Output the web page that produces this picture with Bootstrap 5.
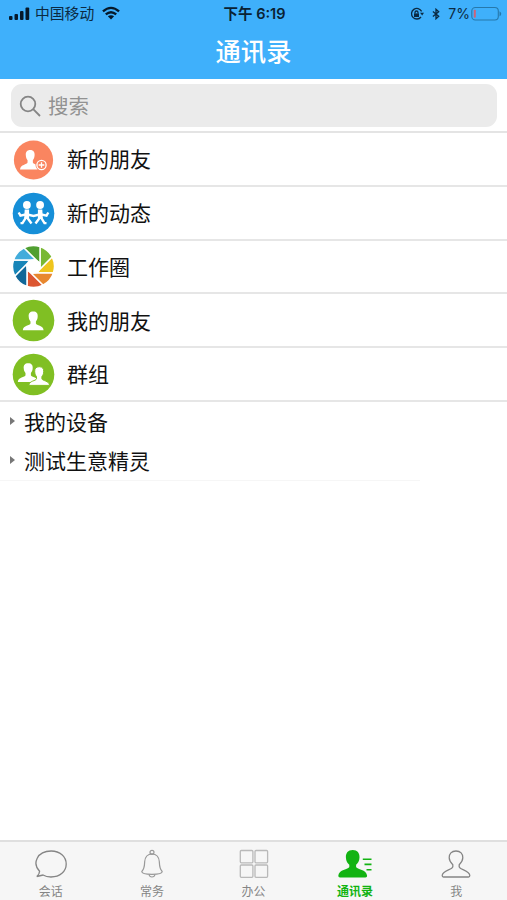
<!DOCTYPE html>
<html lang="zh-CN">
<head>
<meta charset="utf-8">
<meta name="viewport" content="width=device-width, initial-scale=1">
<title>通讯录</title>
<link href="https://cdn.jsdelivr.net/npm/bootstrap@5.3.0/dist/css/bootstrap.min.css" rel="stylesheet">
<style>
body{font-family:"Liberation Sans","Noto Sans CJK SC",sans-serif;color:#111;height:900px;overflow:hidden}
svg{display:block;flex:none}
.app-top{background:#3fb0fb;height:79px}
.status{height:27px;font:15px/27px Inter,"Noto Sans CJK SC",sans-serif;color:#0b2a42}
.status>div{flex:1 1 0}
.carrier{font-size:14.8px;padding-top:1px}
.clock{font-size:14.5px;font-weight:600;color:#0a2233;margin-right:6px}
.batt{font-size:14px}
.title{font-size:25.3px;line-height:50px;font-weight:500}
.search-wrap{height:54px;padding:5px 10px 5px 11px;border-bottom:2px solid #e4e4e4}
.search-box{height:43px;border-radius:11px;background:#ebebeb;color:#929292;font-size:20.5px;padding-left:8px}
.search-box span{padding-top:4px;margin-left:7px}
.list-group .contact{height:53.75px;padding:1px 0 0 12px;border:0;border-bottom:2px solid #e6e6e6;border-radius:0;font-size:21px;color:#111}
.contact svg{margin-right:12px}
.contact span{line-height:30px;padding-top:2px}
.group-row span{line-height:30px;padding-top:3px}
.group-row{height:39px;font-size:21px;padding-left:10px}
.caret{width:0;height:0;border:4px solid transparent;border-left:5px solid #777;border-right:0;margin-right:9px}
.hairline{height:1px;background:#f6f6f6;width:420px}
.tabs{height:60px;background:#f6f6f6;border-top:2px solid #dfdfdf;font-size:12px;color:#858585}
.tab-item{flex:1 1 0;padding-top:7px}
.tab-item span{line-height:16px;margin-top:5px}
.tab-item.on{color:#12b312;font-weight:700}
</style>
<script src="https://cdn.jsdelivr.net/npm/bootstrap@5.3.0/dist/js/bootstrap.bundle.min.js"></script>
</head>
<body class="d-flex flex-column bg-white">
<svg width="0" height="0" class="position-absolute">
  <defs>
    <path id="person" d="M0-9.3C-3.4-9.3-4.7-7.2-4.5-4.4C-4.4-1.9-3.6-.5-2.7.6V2.8C-3.2 5-10 4.6-10.4 9.4H10.4C10 4.6 3.2 5 2.7 2.8V.6C3.6-.5 4.4-1.9 4.5-4.4C4.7-7.2 3.4-9.3 0-9.3Z"/>
    <path id="blade" d="M6.5-20V2.7L18.7-9.5A21 21 0 0 0 6.5-20Z" stroke="#fff" stroke-width="1.5"/>
  </defs>
</svg>
<header class="app-top flex-shrink-0">
  <div class="status d-flex align-items-center">
    <div class="d-flex align-items-center ps-2">
      <svg width="23" height="16" viewBox="0 0 23 16" fill="#06192a"><rect x="1" y="10" width="3.5" height="4" rx="1"/><rect x="6.5" y="8" width="3.5" height="6" rx="1"/><rect x="12" y="5" width="3.5" height="9" rx="1"/><rect x="17.5" y="1.5" width="3.7" height="12.5" rx="1"/></svg>
      <span class="carrier ms-1">中国移动</span>
      <svg class="ms-2" width="18" height="15" viewBox="0 0 19 15" fill="none" stroke="#06192a" stroke-width="2.5"><path d="M1 5.2Q9.5-2.1 18 5.2M4 8.5Q9.5 3.8 15 8.5"/><path d="M9.5 13.8L6.2 10.5Q9.5 8 12.8 10.5Z" fill="#06192a" stroke="none"/></svg>
    </div>
    <span class="clock">下午 6:19</span>
    <div class="d-flex align-items-center justify-content-end">
      <svg width="14" height="14" viewBox="0 0 14 14" fill="none" stroke="#0b2a42" stroke-width="1.3"><path d="M11.6 4.4A5.3 5.3 0 1 0 11 10"/><path d="M10 5.8H14L12.2 8.5Z" fill="#0b2a42" stroke="none"/><rect x="4" y="6.4" width="5" height="3.6" fill="#0b2a42" stroke="none"/><path d="M5 6.5V5.4Q5 4 6.5 4T8 5.4V6.5"/></svg>
      <svg class="ms-2" width="8" height="12" viewBox="0 0 9 13" fill="none" stroke="#0b2a42" stroke-width="1.5"><path d="M1 3.8L7.5 9L4.5 11.8V1.2L7.5 4L1 9.2"/></svg>
      <span class="batt ms-2">7%</span>
      <svg class="me-1" width="33" height="16" viewBox="0 0 33 16"><rect x="1.8" y="1.5" width="26.5" height="12.5" rx="3.5" fill="none" stroke="#2678ab" stroke-width="1.1"/><rect x="3.8" y="3.8" width="2" height="8" rx=".8" fill="#ce6379"/><path d="M29.5 5.2Q33 7.8 29.5 10.4Z" fill="#2678ab"/></svg>
    </div>
  </div>
  <h1 class="title text-white text-center m-0">通讯录</h1>
</header>

<div class="search-wrap flex-shrink-0">
  <div class="search-box d-flex align-items-center">
    <svg width="22" height="22" viewBox="0 0 22 22" fill="none" stroke="#858585" stroke-width="1.8"><circle cx="9" cy="9" r="7.3"/><path d="M14.2 14.2L21 21"/></svg>
    <span>搜索</span>
  </div>
</div>

<main class="flex-grow-1">
  <div class="list-group rounded-0">
    <div class="list-group-item contact d-flex align-items-center">
      <svg width="43" height="43" viewBox="-21.5 -22 43 43"><circle r="19.6" fill="#fa8560"/><use href="#person" transform="translate(-3.3 -.4) scale(.98 1.04)" fill="#fff"/><circle cx="8" cy="5" r="6" fill="#fa8560"/><circle cx="8" cy="5" r="4.6" fill="none" stroke="#fff" stroke-width="1.3"/><path d="M5.2 5H10.8M8 2.2V7.8" stroke="#fff" stroke-width="1.3"/></svg>
      <span>新的朋友</span>
    </div>
    <div class="list-group-item contact d-flex align-items-center">
      <svg width="43" height="43" viewBox="-21.5 -21.5 43 43"><circle r="20.8" fill="#168fd8"/><g fill="#fff"><circle cx="-6.6" cy="-8.5" r="3.9"/><circle cx="6.6" cy="-8.5" r="3.9"/><path d="M-8.8-4H-4.4L-4.4 4.5H-9.3ZM4.4-4H8.8L9.3 4.5H4.4Z"/></g><g fill="none" stroke="#fff" stroke-width="2.4"><path d="M-14.8-1L-13 2.2L-7 .8L0 2.5L7 .8L13 2.2L14.8-1"/><path d="M-13 9.6H-11L-7 3.2L-2 10M13 9.6H11L7 3.2L2 10"/></g></svg>
      <span>新的动态</span>
    </div>
    <div class="list-group-item contact d-flex align-items-center">
      <svg width="43" height="43" viewBox="-21.5 -21.5 43 43"><use href="#blade" fill="#79b833"/><use href="#blade" fill="#efc51d" transform="rotate(45)"/><use href="#blade" fill="#e8872e" transform="rotate(90)"/><use href="#blade" fill="#dc5631" transform="rotate(135)"/><use href="#blade" fill="#116798" transform="rotate(180)"/><use href="#blade" fill="#1785b8" transform="rotate(225)"/><use href="#blade" fill="#42acdb" transform="rotate(270)"/><use href="#blade" fill="#509f31" transform="rotate(315)"/><circle r="7.3" fill="#fff"/></svg>
      <span>工作圈</span>
    </div>
    <div class="list-group-item contact d-flex align-items-center">
      <svg width="43" height="43" viewBox="-21.5 -21.5 43 43"><circle r="20.8" fill="#80bf23"/><use href="#person" transform="translate(-.3 .3)" fill="#fff"/></svg>
      <span>我的朋友</span>
    </div>
    <div class="list-group-item contact d-flex align-items-center">
      <svg width="43" height="43" viewBox="-21.5 -21.5 43 43"><circle r="20.8" fill="#80bf23"/><use href="#person" transform="translate(-5.3 -2)" fill="#fff"/><use href="#person" transform="translate(5.7 1.5)" fill="#fff" stroke="#80bf23" stroke-width="1"/></svg>
      <span>群组</span>
    </div>
  </div>
  <div class="group-row d-flex align-items-center"><i class="caret"></i><span>我的设备</span></div>
  <div class="group-row d-flex align-items-center"><i class="caret"></i><span>测试生意精灵</span></div>
  <div class="hairline"></div>
</main>

<nav class="tabs d-flex flex-shrink-0">
  <div class="tab-item d-flex flex-column align-items-center">
    <svg width="34" height="30" viewBox="0 0 34 30" fill="none" stroke="#858585" stroke-width="1.3"><path d="M5.6 22.3C-2 14.5 3 2 17.2 2C26 2 32.2 7.5 32.2 15C32.2 22.5 26 28 17 28C13.5 28 11 27.2 9 26L2.8 27.5C4.8 26 5.5 24 5.6 22.3Z"/></svg>
    <span>会话</span>
  </div>
  <div class="tab-item d-flex flex-column align-items-center">
    <svg width="24" height="30" viewBox="0 0 24 30" fill="none" stroke="#999" stroke-width="1.2"><circle cx="12" cy="3.3" r="2"/><path d="M12 4.8C7.5 4.8 5 8.5 4.7 12.5C4.5 17 4.5 20 1.8 22.5C1.8 24.2 6.5 25.3 12 25.3S22.2 24.2 22.2 22.5C19.5 20 19.5 17 19.3 12.5C19 8.5 16.5 4.8 12 4.8Z"/><path d="M9 25.5Q9.5 28 12 28T15 25.5"/></svg>
    <span>常务</span>
  </div>
  <div class="tab-item d-flex flex-column align-items-center">
    <svg width="30" height="30" viewBox="0 0 30 30" fill="none" stroke="#b9b9b9" stroke-width="1.3"><rect x="1.3" y="1.5" width="12.6" height="12.3" rx="1"/><rect x="16" y="1.5" width="12.6" height="12.3" rx="1"/><rect x="1.3" y="16" width="12.6" height="12.3" rx="1"/><rect x="16" y="16" width="12.6" height="12.3" rx="1"/></svg>
    <span>办公</span>
  </div>
  <div class="tab-item on d-flex flex-column align-items-center">
    <svg width="34" height="30" viewBox="0 0 34 30" fill="#12b312"><path d="M14.7 1C10 1 7.7 4.2 7.9 8.4C8 12 9.6 14.2 11.3 15.8V18C10.5 20.5.7 20.3.3 26.8Q.2 28.6 2 28.6H27.4Q29.2 28.6 29.1 26.8C28.7 20.3 18.9 20.5 18.1 18V15.8C19.8 14.2 21.4 12 21.5 8.4C21.7 4.2 19.4 1 14.7 1Z"/><path d="M24.8 10.2H33.5M26.5 15.4H33.5M28.5 20.7H33.5" stroke="#12b312" stroke-width="1.6"/></svg>
    <span>通讯录</span>
  </div>
  <div class="tab-item d-flex flex-column align-items-center">
    <svg width="30" height="30" viewBox="0 0 30 30" fill="none" stroke="#858585" stroke-width="1.3"><path d="M15 2C10.6 2 8 4.8 8.2 8.8C8.3 12 10 14 11.8 15.7V17.8C11 21 1.5 21 1.2 26.5Q1.2 28 2.5 28H27.5Q28.8 28 28.8 26.5C28.5 21 19 21 18.2 17.8V15.7C20 14 21.7 12 21.8 8.8C22 4.8 19.4 2 15 2Z"/></svg>
    <span>我</span>
  </div>
</nav>
</body>
</html>
